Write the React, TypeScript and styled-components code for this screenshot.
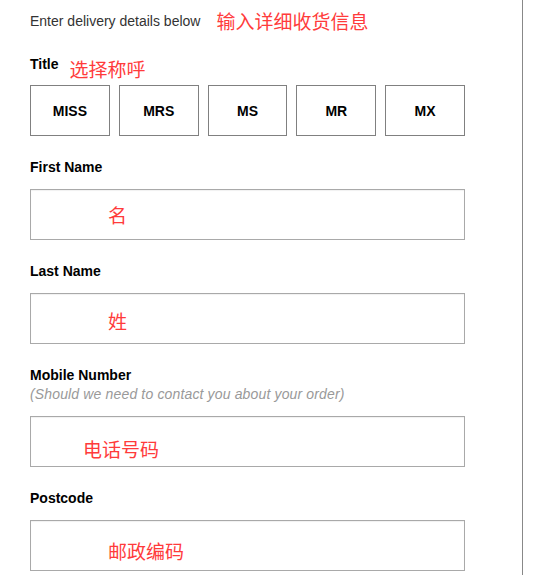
import styled, { createGlobalStyle } from 'styled-components';

interface Field {
  label: string;
  hint?: string;
  note: string;
  noteX: number;
  noteY: number;
}

const titles = ['MISS', 'MRS', 'MS', 'MR', 'MX'];

const fields: Field[] = [
  { label: 'First Name', note: '名', noteX: 77, noteY: 14 },
  { label: 'Last Name', note: '姓', noteX: 77, noteY: 16 },
  {
    label: 'Mobile Number',
    hint: '(Should we need to contact you about your order)',
    note: '电话号码',
    noteX: 52,
    noteY: 21,
  },
  { label: 'Postcode', note: '邮政编码', noteX: 77, noteY: 19 },
];

const GlobalStyle = createGlobalStyle`
  html, body {
    margin: 0;
    padding: 0;
    background: #fff;
    font-family: "Liberation Sans", Arial, sans-serif;
  }
`;

/* ── Styled Components ── */

const Page = styled.div`
  width: 523px;
  min-height: 100vh;
  box-sizing: border-box;
  border-right: 1px solid #888;
  padding: 10px 0 0 30px;
`;

const Form = styled.div`
  width: 435px;
  display: flex;
  flex-direction: column;
`;

const Intro = styled.div`
  display: flex;
  align-items: center;
  height: 22px;
  gap: 16px;
`;

const IntroText = styled.span`
  font-size: 14px;
  line-height: 16px;
  color: #333;
`;

const Note = styled.span`
  font-family: "Noto Sans CJK SC", "Liberation Sans", sans-serif;
  font-size: 19px;
  line-height: 22px;
  color: #ff3b3b;
  white-space: nowrap;
`;

const TitleRow = styled.div`
  display: flex;
  align-items: flex-start;
  gap: 11px;
  margin-top: 24px;

  ${Note} {
    margin-top: 2px;
  }
`;

const Label = styled.span`
  font-size: 14px;
  line-height: 16px;
  font-weight: 700;
  color: #000;
`;

const Hint = styled.span`
  font-size: 14px;
  line-height: 16px;
  font-style: italic;
  color: #999;
  margin-top: 3px;
  letter-spacing: 0.15px;
`;

const TitleGrid = styled.div`
  display: grid;
  grid-template-columns: repeat(5, 1fr);
  gap: 9px;
  margin-top: 5px;
`;

const TitleButton = styled.button`
  height: 51px;
  border: 1px solid #808080;
  background: #fff;
  font-family: "Liberation Sans", Arial, sans-serif;
  font-size: 14px;
  font-weight: 700;
  color: #000;
  padding: 0;
  cursor: pointer;
`;

const FieldBlock = styled.div`
  display: flex;
  flex-direction: column;
  margin-top: 23px;
`;

const InputBox = styled.div<{ $x: number; $y: number }>`
  height: 51px;
  box-sizing: border-box;
  margin-top: 14px;
  border: 1px solid #a9a9a9;
  box-shadow: inset 0 1px 1px rgba(0, 0, 0, 0.06);
  padding: ${({ $y, $x }) => `${$y}px 0 0 ${$x}px`};
  display: flex;
  align-items: flex-start;
`;

/* ── Component ── */

export default function App() {
  return (
    <>
      <GlobalStyle />
      <Page>
        <Form>
          <Intro>
            <IntroText>Enter delivery details below</IntroText>
            <Note>输入详细收货信息</Note>
          </Intro>

          <TitleRow>
            <Label>Title</Label>
            <Note>选择称呼</Note>
          </TitleRow>
          <TitleGrid>
            {titles.map((t) => (
              <TitleButton key={t} type="button">
                {t}
              </TitleButton>
            ))}
          </TitleGrid>

          {fields.map((f) => (
            <FieldBlock key={f.label}>
              <Label>{f.label}</Label>
              {f.hint && <Hint>{f.hint}</Hint>}
              <InputBox $x={f.noteX} $y={f.noteY}>
                <Note>{f.note}</Note>
              </InputBox>
            </FieldBlock>
          ))}
        </Form>
      </Page>
    </>
  );
}
